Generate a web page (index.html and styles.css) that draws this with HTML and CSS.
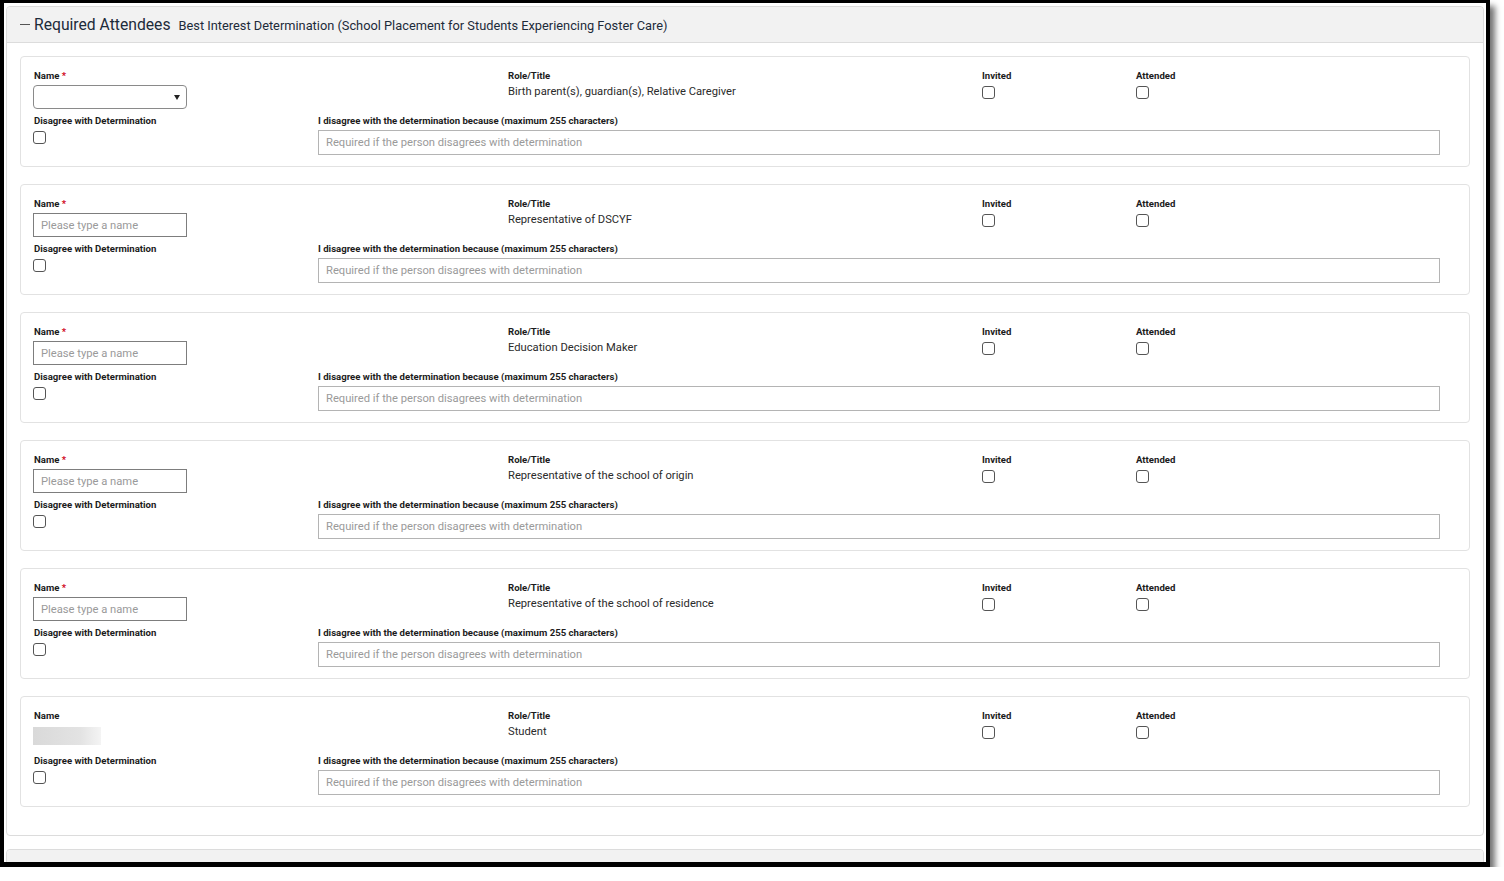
FILE: index.html
```html
<!DOCTYPE html>
<html lang="en">
<head>
  <meta charset="UTF-8">
  <title>Required Attendees</title>
  <link rel="stylesheet" href="styles.css">
</head>
<body>
  <div class="frame">
    <div class="panel">
      <div class="panel-header">
        <span class="collapse-icon"></span>
        <span class="panel-title">Required Attendees</span>
        <span class="panel-subtitle">Best Interest Determination (School Placement for Students Experiencing Foster Care)</span>
      </div>
      <div class="panel-body">

        <div class="attendee">
          <div class="row-top">
            <div class="field">
              <label>Name <span class="req">*</span></label>
              <div class="select-box"><span class="caret"></span></div>
            </div>
            <div class="field">
              <label>Role/Title</label>
              <div class="value">Birth parent(s), guardian(s), Relative Caregiver</div>
            </div>
            <div class="field">
              <label>Invited</label>
              <input type="checkbox" class="check">
            </div>
            <div class="field">
              <label>Attended</label>
              <input type="checkbox" class="check">
            </div>
          </div>
          <div class="row-bottom">
            <div class="field">
              <label>Disagree with Determination</label>
              <input type="checkbox" class="check">
            </div>
            <div class="field">
              <label>I disagree with the determination because (maximum 255 characters)</label>
              <input type="text" class="reason" placeholder="Required if the person disagrees with determination">
            </div>
          </div>
        </div>

        <div class="attendee">
          <div class="row-top">
            <div class="field">
              <label>Name <span class="req">*</span></label>
              <input type="text" class="name-input" placeholder="Please type a name">
            </div>
            <div class="field">
              <label>Role/Title</label>
              <div class="value">Representative of DSCYF</div>
            </div>
            <div class="field">
              <label>Invited</label>
              <input type="checkbox" class="check">
            </div>
            <div class="field">
              <label>Attended</label>
              <input type="checkbox" class="check">
            </div>
          </div>
          <div class="row-bottom">
            <div class="field">
              <label>Disagree with Determination</label>
              <input type="checkbox" class="check">
            </div>
            <div class="field">
              <label>I disagree with the determination because (maximum 255 characters)</label>
              <input type="text" class="reason" placeholder="Required if the person disagrees with determination">
            </div>
          </div>
        </div>

        <div class="attendee">
          <div class="row-top">
            <div class="field">
              <label>Name <span class="req">*</span></label>
              <input type="text" class="name-input" placeholder="Please type a name">
            </div>
            <div class="field">
              <label>Role/Title</label>
              <div class="value">Education Decision Maker</div>
            </div>
            <div class="field">
              <label>Invited</label>
              <input type="checkbox" class="check">
            </div>
            <div class="field">
              <label>Attended</label>
              <input type="checkbox" class="check">
            </div>
          </div>
          <div class="row-bottom">
            <div class="field">
              <label>Disagree with Determination</label>
              <input type="checkbox" class="check">
            </div>
            <div class="field">
              <label>I disagree with the determination because (maximum 255 characters)</label>
              <input type="text" class="reason" placeholder="Required if the person disagrees with determination">
            </div>
          </div>
        </div>

        <div class="attendee">
          <div class="row-top">
            <div class="field">
              <label>Name <span class="req">*</span></label>
              <input type="text" class="name-input" placeholder="Please type a name">
            </div>
            <div class="field">
              <label>Role/Title</label>
              <div class="value">Representative of the school of origin</div>
            </div>
            <div class="field">
              <label>Invited</label>
              <input type="checkbox" class="check">
            </div>
            <div class="field">
              <label>Attended</label>
              <input type="checkbox" class="check">
            </div>
          </div>
          <div class="row-bottom">
            <div class="field">
              <label>Disagree with Determination</label>
              <input type="checkbox" class="check">
            </div>
            <div class="field">
              <label>I disagree with the determination because (maximum 255 characters)</label>
              <input type="text" class="reason" placeholder="Required if the person disagrees with determination">
            </div>
          </div>
        </div>

        <div class="attendee">
          <div class="row-top">
            <div class="field">
              <label>Name <span class="req">*</span></label>
              <input type="text" class="name-input" placeholder="Please type a name">
            </div>
            <div class="field">
              <label>Role/Title</label>
              <div class="value">Representative of the school of residence</div>
            </div>
            <div class="field">
              <label>Invited</label>
              <input type="checkbox" class="check">
            </div>
            <div class="field">
              <label>Attended</label>
              <input type="checkbox" class="check">
            </div>
          </div>
          <div class="row-bottom">
            <div class="field">
              <label>Disagree with Determination</label>
              <input type="checkbox" class="check">
            </div>
            <div class="field">
              <label>I disagree with the determination because (maximum 255 characters)</label>
              <input type="text" class="reason" placeholder="Required if the person disagrees with determination">
            </div>
          </div>
        </div>

        <div class="attendee">
          <div class="row-top">
            <div class="field">
              <label>Name</label>
              <div class="name-static"><span class="blurred"></span></div>
            </div>
            <div class="field">
              <label>Role/Title</label>
              <div class="value">Student</div>
            </div>
            <div class="field">
              <label>Invited</label>
              <input type="checkbox" class="check">
            </div>
            <div class="field">
              <label>Attended</label>
              <input type="checkbox" class="check">
            </div>
          </div>
          <div class="row-bottom">
            <div class="field">
              <label>Disagree with Determination</label>
              <input type="checkbox" class="check">
            </div>
            <div class="field">
              <label>I disagree with the determination because (maximum 255 characters)</label>
              <input type="text" class="reason" placeholder="Required if the person disagrees with determination">
            </div>
          </div>
        </div>

      </div>
    </div>

    <div class="panel next-panel">
      <div class="panel-header"></div>
    </div>
  </div>
</body>
</html>
```

FILE: styles.css
```css
body {
  margin: 0;
  background: #fff;
  font-family: Roboto, "Liberation Sans", sans-serif;
  color: #222;
}
.frame {
  box-sizing: border-box;
  width: 1490px;
  height: 867px;
  border: solid #000;
  border-width: 3px 4px 5px 4px;
  padding: 3px 2px 0 2px;
  overflow: hidden;
  background: #fff;
  box-shadow: 5px 6px 6px rgba(0, 0, 0, 0.55);
}
.panel {
  border: 1px solid #dcdcdc;
  border-radius: 4px;
  background: #fff;
}
.panel-header {
  height: 35px;
  background: #f2f2f2;
  border-bottom: 1px solid #dcdcdc;
  border-radius: 4px 4px 0 0;
  display: flex;
  align-items: center;
  padding-left: 13px;
}
.collapse-icon {
  width: 10px;
  height: 1px;
  background: #555;
  margin-right: 4px;
}
.panel-title {
  font-size: 15.7px;
  color: #1d2b3a;
  margin-right: 8px;
}
.panel-subtitle {
  font-size: 12.8px;
  color: #1d2b3a;
  padding-top: 1px;
}
.panel-body {
  padding: 13px 13px 28px 13px;
}
.attendee {
  border: 1px solid #e2e2e2;
  border-radius: 4px;
  padding: 13px 13px 11px 13px;
  margin-bottom: 17px;
}
.attendee:last-child {
  margin-bottom: 0;
}
.row-top {
  display: grid;
  grid-template-columns: 474px 474px 154px 1fr;
}
.row-bottom {
  display: grid;
  grid-template-columns: 284px 1122px;
  margin-top: 6px;
}
.field {
  display: flex;
  flex-direction: column;
  align-items: flex-start;
}
label {
  font-size: 9.6px;
  font-weight: bold;
  line-height: 11px;
  color: #1c1c1c;
  margin-bottom: 4px;
}
.req {
  color: #d0021b;
}
.value {
  font-size: 11.2px;
  line-height: 13px;
  color: #2b2b2b;
}
.check {
  appearance: none;
  -webkit-appearance: none;
  width: 13px;
  height: 13px;
  margin: 1px 0 0 0;
  border: 1px solid #555;
  border-radius: 3px;
  background: #fff;
}
.row-bottom .check {
  margin-left: -1px;
}
.select-box {
  box-sizing: border-box;
  width: 154px;
  height: 24px;
  margin-left: -1px;
  border: 1px solid #8a8a8a;
  border-radius: 4px;
  position: relative;
}
.caret {
  position: absolute;
  right: 6px;
  top: 9px;
  border-left: 3px solid transparent;
  border-right: 3px solid transparent;
  border-top: 5px solid #222;
}
.name-input {
  box-sizing: border-box;
  width: 154px;
  height: 24px;
  margin: 0 0 0 -1px;
  border: 1px solid #7d7d7d;
  border-radius: 0;
  padding: 0 7px;
  font-family: Roboto, "Liberation Sans", sans-serif;
  font-size: 11.2px;
}
.name-static {
  height: 24px;
}
.blurred {
  display: block;
  width: 68px;
  height: 18px;
  margin: 2px 0 0 -1px;
  background: linear-gradient(to right, #d9d9d9, #e3e3e3 70%, #f4f4f4);
}
.reason {
  box-sizing: border-box;
  width: 1122px;
  height: 25px;
  margin: 0;
  border: 1px solid #b4b4b4;
  border-radius: 0;
  padding: 0 7px;
  font-family: Roboto, "Liberation Sans", sans-serif;
  font-size: 11.2px;
}
input::placeholder {
  color: #9a9a9a;
}
.next-panel {
  margin-top: 13px;
}
```
